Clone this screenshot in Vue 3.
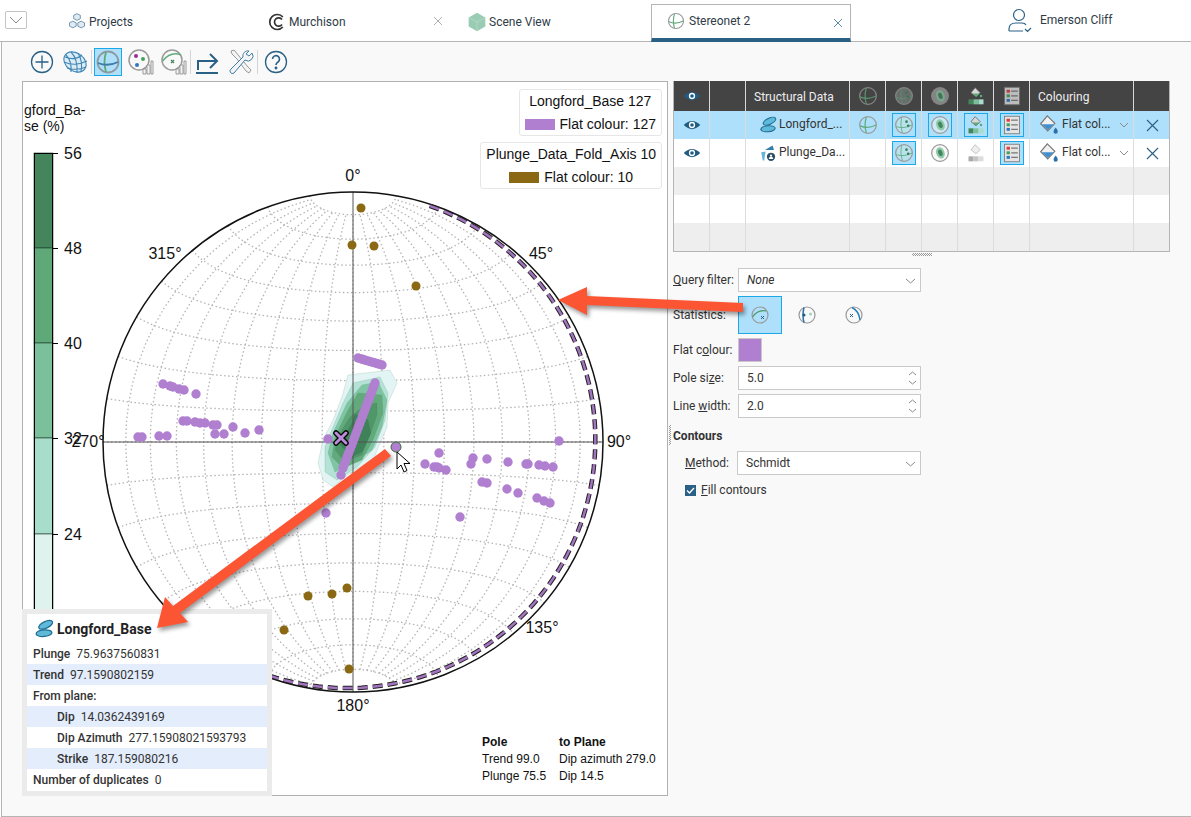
<script setup>
const CX = 353;
const CY = 442;
const R = 250;

// Schmidt (equal area) projection of a lat/lon point
const project = (lat, lon) => {
    const la = (lat * Math.PI) / 180;
    const lo = (lon * Math.PI) / 180;
    const x = Math.cos(la) * Math.sin(lo);
    const y = Math.sin(la);
    const z = Math.cos(la) * Math.cos(lo);
    const k = Math.sqrt(1 / (1 + z));
    return [(CX + x * k * R).toFixed(1), (CY - y * k * R).toFixed(1)].join(",");
};

const gridLines = [];
for (let lat = -80; lat <= 80; lat += 10) {
    const pts = [];
    for (let lon = -90; lon <= 90; lon += 5) pts.push(project(lat, lon));
    gridLines.push(pts.join(" "));
}
for (let lon = -80; lon <= 80; lon += 10) {
    const pts = [];
    for (let lat = -80; lat <= 80; lat += 5) pts.push(project(lat, lon));
    gridLines.push(pts.join(" "));
}

// Density contours, lightest first
const contours = [
    { fill: "#e2f4f3", pts: "348,375 390,370 397,383 388,403 387,427 373,460 350,473 333,487 323,480 318,463 323,440 333,420 342,397" },
    { fill: "#b4e2d6", pts: "353,383 380,377 388,393 385,420 375,447 357,467 337,480 325,472 325,447 333,427 343,403" },
    { fill: "#80c5a3", pts: "362,385 378,382 387,400 382,427 372,450 353,463 335,472 328,453 333,433 347,403" },
    { fill: "#62aa7c", pts: "358,393 382,395 383,413 373,440 362,460 343,468 332,457 335,437 347,412" },
    { fill: "#4f9668", pts: "365,405 377,403 377,415 370,435 362,455 345,462 335,450 340,433 350,417" },
    { fill: "#3f8159", pts: "355,414 368,420 371,433 362,452 352,457 340,445 345,435 352,423" },
];

const line = (x1, y1, x2, y2, n) =>
    Array.from({ length: n }, (_, i) => [x1 + ((x2 - x1) * i) / (n - 1), y1 + ((y2 - y1) * i) / (n - 1)]);

const purple = [
    [163, 384], [170, 386], [173, 387], [179, 389], [184, 390], [196, 394],
    [183, 421], [187, 421], [195, 422], [200, 423], [205, 423], [213, 425], [217, 425],
    [233, 427], [259, 430], [245, 433], [224, 434], [215, 434], [167, 436], [159, 436], [142, 437], [138, 437],
    ...line(358, 358, 382, 365, 10),
    ...line(375, 383, 343, 468, 24),
    [341, 475], [328, 439], [326, 513],
    [559, 441], [439, 453], [425, 464], [434, 467], [437, 467], [439, 468], [446, 470],
    [473, 458], [471, 464], [487, 459], [508, 462], [526, 464], [528, 464],
    [539, 465], [545, 466], [553, 467], [482, 482], [487, 483], [507, 489], [518, 493],
    [537, 498], [544, 501], [550, 503], [460, 517],
];

const brown = [
    [361, 208], [352, 245], [374, 246], [416, 286], [308, 596], [332, 594], [347, 588], [284, 630], [349, 669],
];

const bands = [
    { y: 153, h: 95, fill: "#45855c" },
    { y: 248, h: 95, fill: "#5fa878" },
    { y: 343, h: 95, fill: "#7cc09b" },
    { y: 438, h: 96, fill: "#a8dccb" },
    { y: 534, h: 80, fill: "#dff3ee" },
];
const ticks = [
    { y: 153, label: "56" },
    { y: 248, label: "48" },
    { y: 343, label: "40" },
    { y: 438, label: "32" },
    { y: 534, label: "24" },
];
const angles = [
    { x: 353, y: 181, t: "0°" },
    { x: 541, y: 259, t: "45°" },
    { x: 619, y: 447, t: "90°" },
    { x: 542, y: 633, t: "135°" },
    { x: 353, y: 711, t: "180°" },
    { x: 88, y: 447, t: "270°" },
    { x: 165, y: 259, t: "315°" },
];

// Dashed great circle: leaves the rim near azimuth 18, back to it near 200
const planePath = () => {
    const pts = [];
    for (let az = 18; az <= 200; az += 2) {
        const a = (az * Math.PI) / 180;
        const r = 249 - 7 * Math.sin((Math.PI * (az - 12)) / 195);
        pts.push(`${(CX + r * Math.sin(a)).toFixed(1)},${(CY - r * Math.cos(a)).toFixed(1)}`);
    }
    return pts.join(" ");
};
const planeArc = planePath();

const tabs = [
    { label: "Projects", icon: "i-cubes" },
    { label: "Murchison", icon: "i-logo", close: true },
    { label: "Scene View", icon: "i-hex", short: true },
];

const tooltipRows = [
    { k: "Plunge", v: "75.9637560831" },
    { k: "Trend", v: "97.1590802159", alt: true },
    { k: "From plane:", v: "" },
    { k: "Dip", v: "14.0362439169", alt: true, sub: true },
    { k: "Dip Azimuth", v: "277.15908021593793", sub: true },
    { k: "Strike", v: "187.159080216", alt: true, sub: true },
    { k: "Number of duplicates", v: "0" },
];

const rows = [
    { name: "Longford_...", icon: "i-planes", selected: true, net: true, dots: true, contour: true, bucket: true, list: true },
    { name: "Plunge_Da...", icon: "i-plunge", net: false, dots: true, contour: false, bucket: false, list: true },
];
</script>

<template>
    <div class="app">
        <!-- shared icons -->
        <svg class="defs" width="0" height="0">
            <symbol id="i-cubes" viewBox="0 0 24 24">
                <g fill="#dfeaf2" stroke="#5b87a6" stroke-width="1">
                    <path d="M12 2l4 2v4l-4 2-4-2V4z" />
                    <path d="M7 11l4 2v4l-4 2-4-2v-4z" />
                    <path d="M17 11l4 2v4l-4 2-4-2v-4z" />
                </g>
            </symbol>
            <symbol id="i-logo" viewBox="0 0 24 24">
                <path d="M19 6a9 9 0 1 0 0 12" fill="none" stroke="#333" stroke-width="2" />
                <path d="M18 9a5 5 0 1 0 0 6" fill="none" stroke="#333" stroke-width="2" />
            </symbol>
            <symbol id="i-hex" viewBox="0 0 24 24">
                <path d="M12 1l10 5.500v11L12 23 2 17.500v-11z" fill="#9accb4" />
                <path d="M12 12L2 6.500M12 12l10-5.500M12 12v11" stroke="#b4dac8" fill="none" />
            </symbol>
            <symbol id="i-net" viewBox="0 0 24 24">
                <circle cx="12" cy="12" r="10" fill="none" stroke="#9b9b9b" stroke-width="1.500" />
                <path d="M10 2.500Q7 12 10 21.500" fill="none" stroke="#62aa7c" stroke-width="1.500" />
                <path d="M2.500 13Q12 17 21.500 12" fill="none" stroke="#62aa7c" stroke-width="1.500" />
            </symbol>
            <symbol id="i-net-tool" viewBox="0 0 24 24">
                <circle cx="12" cy="12" r="10.500" fill="none" stroke="#8f9aa0" stroke-width="1.800" />
                <path d="M10 2Q7 12 10 22" fill="none" stroke="#5fa878" stroke-width="1.800" />
                <path d="M2 13Q12 17 22 12" fill="none" stroke="#3f7ca6" stroke-width="1.800" />
            </symbol>
            <symbol id="i-dots" viewBox="0 0 24 24">
                <circle cx="12" cy="12" r="10" fill="#cfe6da" fill-opacity=".35" stroke="#9b9b9b" stroke-width="1.500" />
                <path d="M9 2.500Q7 12 10 21.500M2.500 14Q12 17 21.500 12" fill="none" stroke="#62aa7c" />
                <circle cx="15" cy="8" r="1.600" fill="#3f8159" />
                <circle cx="17" cy="13" r="1.600" fill="#3f8159" />
            </symbol>
            <symbol id="i-contour" viewBox="0 0 24 24">
                <circle cx="12" cy="12" r="10" fill="#f2f2f2" fill-opacity=".5" stroke="#9b9b9b" stroke-width="1.500" />
                <ellipse cx="12.500" cy="12" rx="5" ry="7" fill="#8ccaa9" transform="rotate(-20 12 12)" />
                <ellipse cx="12.500" cy="12" rx="2.500" ry="4" fill="#45855c" transform="rotate(-20 12 12)" />
            </symbol>
            <symbol id="i-fillbars" viewBox="0 0 24 24">
                <path d="M11 2l6 6-5 5-6-5z" fill="#d8d8d8" stroke="#666" />
                <path d="M7.500 9h9l-4 4z" fill="#5fa878" />
                <circle cx="18" cy="12" r="1.500" fill="#5fa878" />
                <rect x="3" y="16" width="6" height="6" fill="#45855c" />
                <rect x="9" y="16" width="6" height="6" fill="#7cc09b" />
                <rect x="15" y="16" width="6" height="6" fill="#a8dccb" />
            </symbol>
            <symbol id="i-fillgrey" viewBox="0 0 24 24">
                <path d="M11 2l6 6-5 5-6-5z" fill="#eee" stroke="#bbb" />
                <rect x="3" y="16" width="6" height="6" fill="#aaa" />
                <rect x="9" y="16" width="6" height="6" fill="#c4c4c4" />
                <rect x="15" y="16" width="6" height="6" fill="#ddd" />
            </symbol>
            <symbol id="i-list" viewBox="0 0 24 24">
                <rect x="3" y="1.500" width="18" height="21" fill="#e4e4e4" stroke="#777" />
                <rect x="5.500" y="4.500" width="4" height="3.500" fill="#e23b3b" />
                <rect x="5.500" y="10" width="4" height="3.500" fill="#45a05f" />
                <rect x="5.500" y="15.500" width="4" height="3.500" fill="#2e79c4" />
                <path d="M11 6h8M11 11.700h8M11 17.200h8" stroke="#777" stroke-width="1.500" />
            </symbol>
            <symbol id="i-bucket" viewBox="0 0 24 24">
                <path d="M10 1l9 9-8.500 9L2 10.500z" fill="#f2f2f2" stroke="#777" stroke-width="1.400" />
                <path d="M3.500 11h14l-7 7z" fill="#3f8fd0" />
                <path d="M20 15c1.700 2.300 2.500 3.500 2.500 5a2.500 2.500 0 0 1-5 0c0-1.500.8-2.700 2.500-5z" fill="#2a6fa8" />
            </symbol>
            <symbol id="i-eye" viewBox="0 0 24 24">
                <path d="M1 12Q12 1 23 12Q12 23 1 12z" fill="#1f5c80" />
                <circle cx="12" cy="12" r="4.200" fill="#fff" />
                <circle cx="12" cy="12" r="2.400" fill="#1f5c80" />
            </symbol>
            <symbol id="i-planes" viewBox="0 0 24 24">
                <ellipse cx="14" cy="7" rx="9" ry="4" fill="#5fb9d9" stroke="#1f6c92" stroke-width="1.500" transform="rotate(-25 14 7)" />
                <ellipse cx="12" cy="17" rx="9.500" ry="4" fill="#5fb9d9" stroke="#1f6c92" stroke-width="1.500" transform="rotate(-5 12 17)" />
            </symbol>
            <symbol id="i-plunge" viewBox="0 0 24 24">
                <path d="M8 8L18 2l2 6z" fill="#2f7fae" />
                <path d="M3 11l6-1-1 4-1 8H5z" fill="#63b3d8" />
                <circle cx="16" cy="17" r="5.500" fill="#2d4f66" />
                <circle cx="16" cy="15.500" r="1.500" fill="#fff" />
                <path d="M13 20a3 3 0 0 1 6 0z" fill="#fff" />
            </symbol>
            <symbol id="i-x" viewBox="0 0 10 10">
                <path d="M1 1l8 8M9 1L1 9" fill="none" stroke="currentColor" />
            </symbol>
        </svg>

        <header class="tabs">
            <button class="collapse">
                <svg width="14" height="8" viewBox="0 0 14 8"><path d="M1 1l6 6 6-6" fill="none" stroke="#888" /></svg>
            </button>
            <div v-for="tab in tabs" :key="tab.label" class="tab" :class="{ 'tab-short': tab.short }">
                <svg class="tab-icon" width="20" height="20"><use :href="'#' + tab.icon" /></svg>
                <span>{{ tab.label }}</span>
                <svg v-if="tab.close" class="tab-close" width="10" height="10"><use href="#i-x" /></svg>
            </div>
            <div class="tab tab-active">
                <svg class="tab-icon" width="18" height="18"><use href="#i-net" /></svg>
                <span>Stereonet 2</span>
                <svg class="tab-close" width="10" height="10"><use href="#i-x" /></svg>
            </div>
            <div class="user">
                <svg width="26" height="26" viewBox="0 0 26 26" fill="none" stroke="#2a6085" stroke-width="1.200">
                    <circle cx="12" cy="8" r="5.500" />
                    <path d="M2 24v-2q0-6 7-6h6q3 0 4 2M2 24h14M18 22l2.500 2.500L24 21" />
                </svg>
                <span>Emerson Cliff</span>
            </div>
        </header>

        <main class="main">
            <div class="toolbar">
                <button class="tool">
                    <svg width="24" height="24" viewBox="0 0 24 24" fill="none" stroke="#2a6085" stroke-width="1.300">
                        <circle cx="12" cy="12" r="10.500" /><path d="M12 5.500v13M5.500 12h13" />
                    </svg>
                </button>
                <button class="tool">
                    <svg width="26" height="26" viewBox="0 0 26 26" fill="#dcecf6" stroke="#3f86b4" stroke-width="1.100">
                        <ellipse cx="13" cy="13" rx="12" ry="9" transform="rotate(35 13 13)" />
                        <path d="M4 6q6 6 5 17M9 3q7 7 6 21M16 4q5 8 3 19M2 13q11 5 23-1M5 19q10 3 19-1M3 8q10 4 17-2" fill="none" />
                    </svg>
                </button>
                <span class="sep"></span>
                <button class="tool tool-on">
                    <svg width="24" height="24"><use href="#i-net-tool" /></svg>
                </button>
                <button class="tool">
                    <svg width="26" height="26" viewBox="0 0 26 26">
                        <circle cx="11" cy="11" r="10" fill="none" stroke="#9b9b9b" stroke-width="1.500" />
                        <circle cx="8" cy="7" r="2" fill="#9b2c94" /><circle cx="15" cy="10" r="2" fill="#45a05f" /><circle cx="9" cy="16" r="2" fill="#2e79c4" />
                        <path d="M15 25v-5h3v5zM19 25V16h3v9zM23 25V12h2v13z" fill="#f4f4f4" stroke="#888" stroke-width=".8" />
                    </svg>
                </button>
                <button class="tool">
                    <svg width="26" height="26" viewBox="0 0 26 26" fill="none">
                        <circle cx="11" cy="11" r="10" stroke="#9b9b9b" stroke-width="1.500" />
                        <path d="M1.500 12Q10 2 20 6" stroke="#62aa7c" stroke-width="1.500" />
                        <path d="M10 11l3 3M13 11l-3 3" stroke="#45855c" stroke-width="1.200" />
                        <path d="M15 25v-5h3v5zM19 25V16h3v9zM23 25V12h2v13z" fill="#f4f4f4" stroke="#888" stroke-width=".8" />
                    </svg>
                </button>
                <span class="sep sep-b"></span>
                <button class="tool">
                    <svg width="26" height="26" viewBox="0 0 26 26" fill="none" stroke="#2a6085" stroke-width="2">
                        <path d="M3 21v-9h18M15 5l7 7-7 7M1 24h22" />
                    </svg>
                </button>
                <button class="tool">
                    <svg width="26" height="26" viewBox="0 0 26 26" fill="#f4f4f4" stroke="#3f7ca6" stroke-width="1">
                        <path d="M3 2l3-1 5 6 9 11 3 3-2 3-3-2-9-12-5-5z" stroke="#999" />
                        <path d="M24 4l-3 3-3-2 3-3a5 5 0 0 0-6 6L3 20a2.500 2.500 0 0 0 3 4L17 11a5 5 0 0 0 7-7z" />
                    </svg>
                </button>
                <span class="sep sep-c"></span>
                <button class="tool">
                    <svg width="24" height="24" viewBox="0 0 24 24" fill="none" stroke="#2a6085" stroke-width="1.300">
                        <circle cx="12" cy="12" r="10.500" />
                        <path d="M8.500 9a3.500 3.500 0 1 1 5.500 3c-1.300.8-2 1.500-2 3" stroke-width="1.600" />
                        <circle cx="12" cy="18" r=".8" fill="#2a6085" />
                    </svg>
                </button>
            </div>

            <div class="workspace">
                <section class="plot">
                    <svg class="chart" width="645" height="714" viewBox="22 81 645 714">
                        <text x="24" y="115" class="axis-title">gford_Ba-</text>
                        <text x="24" y="131" class="axis-title">se (%)</text>
                        <rect v-for="b in bands" :key="b.y" x="34" :y="b.y" width="19" :height="b.h" :fill="b.fill" stroke="#1d3b28" stroke-width=".6" />
                        <path d="M34.500 153V614M52.500 153V614M34 153.500H53" stroke="#000" fill="none" />
                        <g v-for="t in ticks" :key="t.y">
                            <path :d="`M53 ${t.y + 0.5}H58`" stroke="#000" />
                            <text x="64" :y="t.y + 6" class="tick">{{ t.label }}</text>
                        </g>

                        <polyline v-for="(g, i) in gridLines" :key="i" :points="g" fill="none" stroke="#b4b4b4" stroke-width="1.300" stroke-dasharray="1.500 2.500" />
                        <polygon v-for="c in contours" :key="c.fill" :points="c.pts" :fill="c.fill" stroke="#3f8159" stroke-opacity=".25" stroke-width=".6" />
                        <path :d="`M${CX - R} ${CY}H${CX + R}M${CX} ${CY - R}V${CY + R}`" stroke="#555" stroke-width="1" fill="none" />
                        <circle :cx="CX" :cy="CY" :r="R" fill="none" stroke="#111" stroke-width="1.500" />
                        <polyline :points="planeArc" fill="none" stroke="#222" stroke-width="4.500" stroke-dasharray="10 5" />
                        <polyline :points="planeArc" fill="none" stroke="#a374bf" stroke-width="2.500" stroke-dasharray="10 5" />

                        <circle v-for="(p, i) in brown" :key="'b' + i" :cx="p[0]" :cy="p[1]" r="4.500" fill="#8b6914" />
                        <circle v-for="(p, i) in purple" :key="'p' + i" :cx="p[0]" :cy="p[1]" r="4.700" fill="#b07fd0" />
                        <circle cx="396" cy="447" r="5" fill="#b07fd0" stroke="#3f6b3a" />
                        <path d="M336 433l10 10M346 433l-10 10" stroke="#000" stroke-width="5.500" stroke-linecap="round" />
                        <path d="M336 433l10 10M346 433l-10 10" stroke="#bb8cda" stroke-width="3" stroke-linecap="round" />

                        <text v-for="a in angles" :key="a.t" :x="a.x" :y="a.y" class="angle">{{ a.t }}</text>
                    </svg>

                    <div class="legends">
                        <div class="legend">
                            <div>Longford_Base 127</div>
                            <div class="legend-row"><i class="swatch swatch-purple"></i>Flat colour: 127</div>
                        </div>
                        <div class="legend">
                            <div>Plunge_Data_Fold_Axis 10</div>
                            <div class="legend-row"><i class="swatch swatch-brown"></i>Flat colour: 10</div>
                        </div>
                    </div>

                    <div class="readout">
                        <b>Pole</b><b>to Plane</b>
                        <span>Trend 99.0</span><span>Dip azimuth 279.0</span>
                        <span>Plunge 75.5</span><span>Dip 14.5</span>
                    </div>
                </section>

                <aside class="side">
                    <div class="table">
                        <div class="tr th">
                            <div class="td"><svg width="18" height="18"><use href="#i-eye" /></svg></div>
                            <div class="td"></div>
                            <div class="td td-text">Structural Data</div>
                            <div class="td"><svg class="dim" width="20" height="20"><use href="#i-net" /></svg></div>
                            <div class="td"><svg class="dim" width="20" height="20"><use href="#i-dots" /></svg></div>
                            <div class="td"><svg class="dim" width="20" height="20"><use href="#i-contour" /></svg></div>
                            <div class="td"><svg width="20" height="20"><use href="#i-fillbars" /></svg></div>
                            <div class="td"><svg class="dim" width="20" height="20"><use href="#i-list" /></svg></div>
                            <div class="td td-text">Colouring</div>
                            <div class="td"></div>
                        </div>
                        <div v-for="r in rows" :key="r.name" class="tr" :class="{ selected: r.selected }">
                            <div class="td"><svg width="18" height="18"><use href="#i-eye" /></svg></div>
                            <div class="td"></div>
                            <div class="td td-name">
                                <svg width="18" height="18"><use :href="'#' + r.icon" /></svg>
                                <span>{{ r.name }}</span>
                            </div>
                            <div class="td"><svg v-if="r.net" width="20" height="20"><use href="#i-net" /></svg></div>
                            <div class="td"><span class="cell-on"><svg width="20" height="20"><use href="#i-dots" /></svg></span></div>
                            <div class="td">
                                <span :class="{ 'cell-on': r.contour }"><svg class="block" width="20" height="20"><use href="#i-contour" /></svg></span>
                            </div>
                            <div class="td">
                                <span :class="{ 'cell-on': r.bucket }"><svg class="block" width="20" height="20"><use :href="r.bucket ? '#i-fillbars' : '#i-fillgrey'" /></svg></span>
                            </div>
                            <div class="td"><span class="cell-on"><svg width="20" height="20"><use href="#i-list" /></svg></span></div>
                            <div class="td td-colour">
                                <svg width="20" height="20"><use href="#i-bucket" /></svg>
                                <span>Flat col...</span>
                                <svg class="chev" width="10" height="6" viewBox="0 0 10 6"><path d="M1 1l4 4 4-4" fill="none" stroke="#8a8a8a" /></svg>
                            </div>
                            <div class="td">
                                <svg width="13" height="13" viewBox="0 0 13 13"><path d="M1 1l11 11M12 1L1 12" stroke="#2a6085" stroke-width="1.100" /></svg>
                            </div>
                        </div>
                        <div class="tr grey"><div v-for="n in 10" :key="n" class="td"></div></div>
                        <div class="tr"><div v-for="n in 10" :key="n" class="td"></div></div>
                        <div class="tr grey"><div v-for="n in 10" :key="n" class="td"></div></div>
                    </div>
                    <div class="grip"></div>

                    <div class="form">
                        <label class="row">
                            <span class="lbl"><u>Q</u>uery filter:</span>
                            <div class="field"><em>None</em><svg class="chev" width="11" height="6" viewBox="0 0 11 6"><path d="M1 1l4.500 4 4.500-4" fill="none" stroke="#8a8a8a" /></svg></div>
                        </label>
                        <div class="row row-stats">
                            <span class="lbl">Statistics:</span>
                            <button class="stat stat-on">
                                <svg width="18" height="18" viewBox="0 0 18 18" fill="none">
                                    <circle cx="9" cy="9" r="8" stroke="#999" stroke-width="1.200" />
                                    <path d="M1.500 11Q7 3 15.500 5" stroke="#4f9668" stroke-width="1.200" />
                                    <path d="M10 10l3 3M13 10l-3 3" stroke="#2a6085" />
                                </svg>
                            </button>
                            <button class="stat">
                                <svg width="18" height="18" viewBox="0 0 18 18" fill="none">
                                    <circle cx="9" cy="9" r="8" stroke="#999" stroke-width="1.200" />
                                    <path d="M6 1.500Q4 9 6 16.500" stroke="#2a6fa8" stroke-width="1.500" />
                                    <circle cx="6" cy="9" r="1.500" fill="#1f5c80" />
                                    <circle cx="12.500" cy="8" r="1.500" fill="#9ad4b4" />
                                </svg>
                            </button>
                            <button class="stat">
                                <svg width="18" height="18" viewBox="0 0 18 18" fill="none">
                                    <circle cx="9" cy="9" r="8" stroke="#999" stroke-width="1.200" />
                                    <path d="M7 1.500Q14 5 15 14" stroke="#2a7fb8" stroke-width="1.500" />
                                    <path d="M5 8l3 3M8 8l-3 3" stroke="#2a6085" />
                                </svg>
                            </button>
                        </div>
                        <div class="row">
                            <span class="lbl">Flat c<u>o</u>lour:</span>
                            <span class="colour"></span>
                        </div>
                        <label class="row">
                            <span class="lbl">Pole si<u>z</u>e:</span>
                            <div class="field">5.0
                                <svg class="spin" width="9" height="16" viewBox="0 0 9 16"><path d="M1 5l3.500-3L8 5M1 11l3.500 3L8 11" fill="none" stroke="#8a8a8a" /></svg>
                            </div>
                        </label>
                        <label class="row">
                            <span class="lbl">Line <u>w</u>idth:</span>
                            <div class="field">2.0
                                <svg class="spin" width="9" height="16" viewBox="0 0 9 16"><path d="M1 5l3.500-3L8 5M1 11l3.500 3L8 11" fill="none" stroke="#8a8a8a" /></svg>
                            </div>
                        </label>
                        <div class="contours">Contours</div>
                        <label class="row row-sub">
                            <span class="lbl lbl-sub"><u>M</u>ethod:</span>
                            <div class="field">Schmidt<svg class="chev" width="11" height="6" viewBox="0 0 11 6"><path d="M1 1l4.500 4 4.500-4" fill="none" stroke="#8a8a8a" /></svg></div>
                        </label>
                        <label class="check">
                            <span class="box"><svg width="11" height="11" viewBox="0 0 11 11"><path d="M2 5.500l2.500 2.500L9 3" fill="none" stroke="#fff" stroke-width="1.300" /></svg></span>
                            <span><u>F</u>ill contours</span>
                        </label>
                    </div>
                </aside>
            </div>
        </main>

        <!-- info popup for the picked pole -->
        <div class="tooltip">
            <div class="tip-head">
                <svg width="20" height="20"><use href="#i-planes" /></svg>
                <strong>Longford_Base</strong>
            </div>
            <div v-for="t in tooltipRows" :key="t.k" class="tip-row" :class="{ alt: t.alt, sub: t.sub }">
                <b>{{ t.k }}</b><span>{{ t.v }}</span>
            </div>
        </div>

        <!-- annotation arrows -->
        <svg class="arrows" width="1191" height="817" viewBox="0 0 1191 817">
            <path d="M397 452l0 17 4-4 3 7 3-1.500-3-7h6z" fill="#fff" stroke="#000" />
            <g class="arrow">
                <polygon points="558,300 587,287 587,296 743,303 743,312 587,305 587,315" />
                <polygon points="157,628 165,597 173,606 385,449 391,456 180,613 188,622" />
            </g>
        </svg>
    </div>
</template>

<style>
html, body {
    margin: 0;
    background: #fff;
}
</style>

<style scoped>
.app {
    position: relative;
    width: 1191px;
    height: 817px;
    overflow: hidden;
    font-family: Roboto, "Liberation Sans", sans-serif;
    font-size: 12px;
    color: #333;
}

.defs {
    position: absolute;
}

.block {
    display: block;
}

button {
    font: inherit;
    background: none;
    border: 0;
    padding: 0;
}

/* tabs */
.tabs {
    display: flex;
    align-items: flex-end;
    height: 41px;
    border-bottom: 1px solid #b5b5b5;
    background: #fff;
    padding-left: 5px;
}

.collapse {
    width: 22px;
    height: 18px;
    margin: 0 34px 12px 0;
    border: 1px solid #c4c4c4;
    border-radius: 2px;
    display: flex;
    align-items: center;
    justify-content: center;
}

.tab {
    position: relative;
    display: flex;
    align-items: center;
    gap: 2px;
    width: 200px;
    height: 38px;
    box-sizing: border-box;
    padding: 0 0 1px 6px;
    color: #2f3b47;
    font-size: 12px;
}

.tab-short {
    width: 190px;
}

.tab-icon {
    flex: none;
}

.tab-close {
    position: absolute;
    right: 18px;
    top: 13px;
    color: #b0b0b0;
}

.tab-active {
    width: 200px;
    padding-left: 15px;
    gap: 4px;
    border: 1px solid #b5b5b5;
    border-bottom: 4px solid #2a6085;
    margin-bottom: -1px;
}

.tab-active .tab-close {
    color: #5d8aa8;
    right: 7px;
}

.user {
    display: flex;
    align-items: center;
    gap: 7px;
    margin: 0 0 8px 156px;
    color: #2f3b47;
}

/* main area */
.main {
    height: 775px;
    box-sizing: border-box;
    border-left: 1px solid #b5b5b5;
    border-bottom: 1px solid #b5b5b5;
    margin-left: 1px;
    background: #f9f9f9;
}

.toolbar {
    display: flex;
    align-items: center;
    height: 39px;
    padding-left: 26px;
}

.tool {
    display: flex;
    align-items: center;
    justify-content: center;
    width: 28px;
    height: 28px;
    margin-right: 5px;
    box-sizing: border-box;
    border: 1px solid transparent;
}

.tool-on {
    background: #aee0fb;
    border-color: #1ba8e8;
}

.sep {
    width: 1px;
    height: 24px;
    margin: 0 2px 0 -3px;
    background: #d5d5d5;
}

.sep-b {
    margin-right: 3px;
}

.sep-c {
    margin-right: 4px;
}

.workspace {
    display: flex;
    gap: 5px;
    padding-left: 20px;
}

.plot {
    position: relative;
    width: 646px;
    height: 715px;
    box-sizing: border-box;
    border: 1px solid #b0b0b0;
    background: #fff;
    font-family: "Liberation Sans", Arial, sans-serif;
    color: #111;
}

.chart {
    position: absolute;
    left: -1px;
    top: -1px;
    display: block;
}

.axis-title {
    font-size: 14px;
    fill: #111;
}

.tick,
.angle {
    font-size: 16px;
    fill: #111;
}

.angle {
    text-anchor: middle;
}

.legends {
    position: absolute;
    top: 7px;
    right: 5px;
    display: flex;
    flex-direction: column;
    align-items: flex-end;
    gap: 6px;
    font-size: 14px;
}

.legend {
    box-sizing: border-box;
    height: 47px;
    padding: 0 5px;
    border: 1px solid #e6e6e6;
    border-radius: 3px;
    background: #fff;
    text-align: center;
    line-height: 23px;
}

.legend-row {
    display: flex;
    align-items: center;
    justify-content: center;
    gap: 5px;
}

.swatch {
    width: 30px;
    height: 11px;
}

.swatch-purple {
    background: #b07fd0;
}

.swatch-brown {
    background: #8b6914;
}

.readout {
    position: absolute;
    left: 459px;
    top: 652px;
    display: grid;
    grid-template-columns: 77px auto;
    font-size: 12px;
    line-height: 17px;
}

/* right side */
.side {
    width: 497px;
}

.table {
    border: 1px solid #b5b5b5;
    border-top: 0;
    background: #fff;
}

.tr {
    display: grid;
    grid-template-columns: 36px 36px 104px 36px 36px 36px 36px 36px 104px 36px;
    height: 28px;
}

.td {
    display: flex;
    align-items: center;
    justify-content: center;
    min-width: 0;
    box-sizing: border-box;
    border-right: 1px solid #dcdcdc;
}

.td:last-child {
    border-right: 0;
}

.th {
    height: 30px;
    background: #444;
    color: #eee;
}

.th .td {
    border-right-color: #d8d8d8;
}

.dim {
    opacity: .75;
}

.td-text {
    justify-content: flex-start;
    padding: 2px 0 0 8px;
}

.td-name {
    justify-content: flex-start;
    padding-left: 13px;
    gap: 2px;
    white-space: nowrap;
}

.td-name span,
.td-colour span {
    padding-bottom: 2px;
}

.td-colour {
    justify-content: flex-start;
    padding-left: 9px;
    gap: 3px;
    white-space: nowrap;
}

.td-colour .chev {
    margin-left: 5px;
}

.selected {
    background: #aee0fb;
}

.grey {
    background: #eee;
}

.cell-on {
    display: flex;
    align-items: center;
    justify-content: center;
    width: 24px;
    height: 24px;
    box-sizing: border-box;
    border: 1px solid #1ba8e8;
    background: #aee0fb;
}

.grip {
    width: 20px;
    height: 3px;
    margin: 1px 0 0 239px;
    background: repeating-conic-gradient(#999 0 25%, transparent 0 50%) 0 0 / 2px 2px;
}

.form {
    position: relative;
    display: flex;
    flex-direction: column;
    gap: 4px;
    padding-top: 12px;
    width: 248px;
}

.row {
    display: flex;
    align-items: center;
    min-height: 24px;
}

.row-sub {
    margin-top: 3px;
}

.lbl {
    flex: none;
    width: 65px;
    white-space: nowrap;
}

.lbl-sub {
    width: 52px;
    padding-left: 12px;
}

.field {
    position: relative;
    display: flex;
    align-items: center;
    flex: 1;
    height: 24px;
    box-sizing: border-box;
    padding-left: 8px;
    border: 1px solid #c9c9c9;
    background: #fff;
}

.field .chev {
    position: absolute;
    right: 4px;
    top: 9px;
}

.spin {
    position: absolute;
    right: 3px;
    top: 3px;
}

.row-stats {
    height: 38px;
}

.stat {
    display: flex;
    align-items: center;
    justify-content: center;
    width: 44px;
    height: 38px;
    margin-right: 3px;
    box-sizing: border-box;
    border: 1px solid transparent;
}

.stat-on {
    background: #aee0fb;
    border-color: #1ba8e8;
}

.colour {
    width: 24px;
    height: 24px;
    box-sizing: border-box;
    border: 1px solid #c9c9c9;
    background: #b07fd0;
}

.contours {
    position: relative;
    margin-top: 7px;
    padding-bottom: 1px;
    font-weight: 700;
    line-height: 14px;
}

.contours::before {
    content: "";
    position: absolute;
    left: -4px;
    top: -4px;
    height: 20px;
    width: 2px;
    background: repeating-conic-gradient(#999 0 25%, transparent 0 50%) 0 0 / 2px 2px;
}

.check {
    display: flex;
    align-items: center;
    gap: 5px;
    margin: 4px 0 0 12px;
}

.box {
    display: flex;
    align-items: center;
    justify-content: center;
    width: 11px;
    height: 11px;
    background: #2a6085;
}

/* popup */
.tooltip {
    position: absolute;
    left: 22px;
    top: 609px;
    width: 250px;
    height: 187px;
    box-sizing: border-box;
    border: 5px solid #ebebeb;
    background: #fff;
    color: #333;
}

.tip-head {
    display: flex;
    align-items: center;
    gap: 3px;
    height: 29px;
    padding-left: 7px;
    font-size: 14px;
    color: #222;
}

.tip-row {
    display: flex;
    align-items: center;
    gap: 6px;
    height: 21px;
    padding-left: 6px;
}

.tip-row b {
    font-weight: 500;
}

.tip-row.alt {
    background: #e3edfb;
}

.tip-row.sub {
    padding-left: 30px;
}

/* arrows */
.arrows {
    position: absolute;
    left: 0;
    top: 0;
    pointer-events: none;
}

.arrow {
    fill: #fb5533;
    filter: drop-shadow(2px 3px 2px rgba(0, 0, 0, .4));
}
</style>
